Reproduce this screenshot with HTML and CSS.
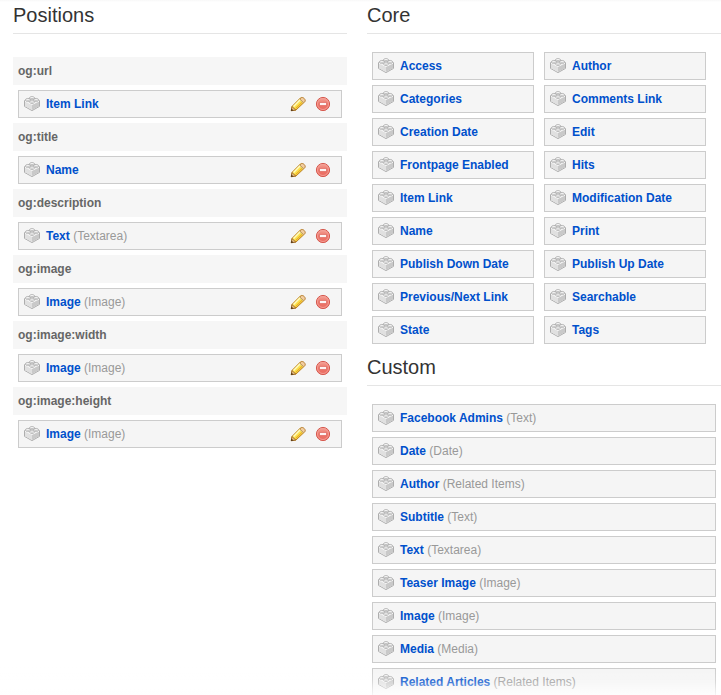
FILE: index.html
```html
<!DOCTYPE html>
<html lang="en">
<head>
<meta charset="utf-8">
<title>Positions</title>
<link rel="stylesheet" href="styles.css">
</head>
<body>
<svg class="sprite" aria-hidden="true">
  <defs>
    <linearGradient id="wood" x1="0" y1="0" x2="1" y2="1"><stop offset="0" stop-color="#fff58a"/><stop offset=".5" stop-color="#fde04a"/><stop offset="1" stop-color="#efb52a"/></linearGradient>
    <linearGradient id="red" x1="0" y1="0" x2="0" y2="1"><stop offset="0" stop-color="#f4a79c"/><stop offset=".5" stop-color="#ec7468"/><stop offset="1" stop-color="#ea6c62"/></linearGradient>
    <symbol id="brick" viewBox="0 0 16 16">
      <path d="M.5 4.6 8 1.2l7.5 3.4v5.8L8 14.6.5 10.4z" fill="#f0f0f0" stroke="#adadad"/>
      <path d="M8 8.4 15 5.2v5L8 14z" fill="#c9c9c9"/>
      <path d="M1 5.2 8 8.4V14l-7-3.8z" fill="#e0e0e0"/>
      <path d="M1 5.1 8 8.4l7-3.3" fill="none" stroke="#fafafa"/>
      <g fill="#fafafa" stroke="#a8a8a8" stroke-width=".7">
        <path d="M5.8 1.5v1.3c0 1.3 4.4 1.3 4.4 0V1.5"/><ellipse cx="8" cy="1.5" rx="2.2" ry="1"/>
        <path d="M1.7 3.4v1.3c0 1.3 4.4 1.3 4.4 0V3.4"/><ellipse cx="3.9" cy="3.4" rx="2.2" ry="1"/>
        <path d="M9.9 3.4v1.3c0 1.3 4.4 1.3 4.4 0V3.4"/><ellipse cx="12.1" cy="3.4" rx="2.2" ry="1"/>
        <path d="M5.8 5.2v1.4c0 1.3 4.4 1.3 4.4 0V5.2"/><ellipse cx="8" cy="5.2" rx="2.2" ry="1"/>
      </g>
    </symbol>
    <symbol id="pencil" viewBox="0 0 16 16">
      <path d="M1.4 14.5 2 10.4 10.4 2c1.8-1.8 6 1.6 4.1 4L6 14z" fill="url(#wood)" stroke="#bd811f"/>
      <path d="m3.6 10.4 6.8-6.8" stroke="#fffcc4" stroke-width="1.4"/>
      <path d="m5.6 12.6 7.6-7.4" stroke="#e2a425"/>
      <path d="m11 1.9c1.6-1.4 5.2 1.4 3.8 3.6l-1 1.2-3.8-3.6z" fill="#f2cda0" stroke="#b98647" stroke-width=".8"/>
      <path d="m9.6 3.4 3.4 3.4" stroke="#cfc79c" stroke-width=".9"/>
      <path d="M2 10.6 5.8 14l-4.6.8z" fill="#e9c186" stroke="#94611f" stroke-width=".8"/>
      <path d="M1.4 12.4.9 15.1l2.7-.6z" fill="#553819"/>
    </symbol>
    <symbol id="remove" viewBox="0 0 16 16">
      <circle cx="8" cy="8" r="6.6" fill="url(#red)" stroke="#d65a50"/>
      <circle cx="8" cy="8" r="5.5" fill="none" stroke="#f4a097" stroke-width=".9"/>
      <path d="M4.5 6.6h7v2.8h-7z" fill="#fff" stroke="#d9564c" stroke-width=".6"/>
    </symbol>
  </defs>
</svg>
<main class="layout">
  <section class="column">
    <h2 class="legend">Positions</h2>
    <div class="positions">
      <h3 class="position">og:url</h3>
      <div class="element"><svg class="icon"><use href="#brick"/></svg><p class="name"><a href="#">Item Link</a></p><button class="tool" aria-label="Edit"><svg class="icon"><use href="#pencil"/></svg></button><button class="tool" aria-label="Remove"><svg class="icon"><use href="#remove"/></svg></button></div>
      <h3 class="position">og:title</h3>
      <div class="element"><svg class="icon"><use href="#brick"/></svg><p class="name"><a href="#">Name</a></p><button class="tool" aria-label="Edit"><svg class="icon"><use href="#pencil"/></svg></button><button class="tool" aria-label="Remove"><svg class="icon"><use href="#remove"/></svg></button></div>
      <h3 class="position">og:description</h3>
      <div class="element"><svg class="icon"><use href="#brick"/></svg><p class="name"><a href="#">Text</a> (Textarea)</p><button class="tool" aria-label="Edit"><svg class="icon"><use href="#pencil"/></svg></button><button class="tool" aria-label="Remove"><svg class="icon"><use href="#remove"/></svg></button></div>
      <h3 class="position">og:image</h3>
      <div class="element"><svg class="icon"><use href="#brick"/></svg><p class="name"><a href="#">Image</a> (Image)</p><button class="tool" aria-label="Edit"><svg class="icon"><use href="#pencil"/></svg></button><button class="tool" aria-label="Remove"><svg class="icon"><use href="#remove"/></svg></button></div>
      <h3 class="position">og:image:width</h3>
      <div class="element"><svg class="icon"><use href="#brick"/></svg><p class="name"><a href="#">Image</a> (Image)</p><button class="tool" aria-label="Edit"><svg class="icon"><use href="#pencil"/></svg></button><button class="tool" aria-label="Remove"><svg class="icon"><use href="#remove"/></svg></button></div>
      <h3 class="position">og:image:height</h3>
      <div class="element"><svg class="icon"><use href="#brick"/></svg><p class="name"><a href="#">Image</a> (Image)</p><button class="tool" aria-label="Edit"><svg class="icon"><use href="#pencil"/></svg></button><button class="tool" aria-label="Remove"><svg class="icon"><use href="#remove"/></svg></button></div>
    </div>
  </section>
  <div class="column">
    <section class="group">
      <h2 class="legend">Core</h2>
      <div class="elements core">
        <div class="element"><svg class="icon"><use href="#brick"/></svg><p class="name"><a href="#">Access</a></p></div>
        <div class="element"><svg class="icon"><use href="#brick"/></svg><p class="name"><a href="#">Author</a></p></div>
        <div class="element"><svg class="icon"><use href="#brick"/></svg><p class="name"><a href="#">Categories</a></p></div>
        <div class="element"><svg class="icon"><use href="#brick"/></svg><p class="name"><a href="#">Comments Link</a></p></div>
        <div class="element"><svg class="icon"><use href="#brick"/></svg><p class="name"><a href="#">Creation Date</a></p></div>
        <div class="element"><svg class="icon"><use href="#brick"/></svg><p class="name"><a href="#">Edit</a></p></div>
        <div class="element"><svg class="icon"><use href="#brick"/></svg><p class="name"><a href="#">Frontpage Enabled</a></p></div>
        <div class="element"><svg class="icon"><use href="#brick"/></svg><p class="name"><a href="#">Hits</a></p></div>
        <div class="element"><svg class="icon"><use href="#brick"/></svg><p class="name"><a href="#">Item Link</a></p></div>
        <div class="element"><svg class="icon"><use href="#brick"/></svg><p class="name"><a href="#">Modification Date</a></p></div>
        <div class="element"><svg class="icon"><use href="#brick"/></svg><p class="name"><a href="#">Name</a></p></div>
        <div class="element"><svg class="icon"><use href="#brick"/></svg><p class="name"><a href="#">Print</a></p></div>
        <div class="element"><svg class="icon"><use href="#brick"/></svg><p class="name"><a href="#">Publish Down Date</a></p></div>
        <div class="element"><svg class="icon"><use href="#brick"/></svg><p class="name"><a href="#">Publish Up Date</a></p></div>
        <div class="element"><svg class="icon"><use href="#brick"/></svg><p class="name"><a href="#">Previous/Next Link</a></p></div>
        <div class="element"><svg class="icon"><use href="#brick"/></svg><p class="name"><a href="#">Searchable</a></p></div>
        <div class="element"><svg class="icon"><use href="#brick"/></svg><p class="name"><a href="#">State</a></p></div>
        <div class="element"><svg class="icon"><use href="#brick"/></svg><p class="name"><a href="#">Tags</a></p></div>
      </div>
    </section>
    <section class="group">
      <h2 class="legend">Custom</h2>
      <div class="elements">
        <div class="element"><svg class="icon"><use href="#brick"/></svg><p class="name"><a href="#">Facebook Admins</a> (Text)</p></div>
        <div class="element"><svg class="icon"><use href="#brick"/></svg><p class="name"><a href="#">Date</a> (Date)</p></div>
        <div class="element"><svg class="icon"><use href="#brick"/></svg><p class="name"><a href="#">Author</a> (Related Items)</p></div>
        <div class="element"><svg class="icon"><use href="#brick"/></svg><p class="name"><a href="#">Subtitle</a> (Text)</p></div>
        <div class="element"><svg class="icon"><use href="#brick"/></svg><p class="name"><a href="#">Text</a> (Textarea)</p></div>
        <div class="element"><svg class="icon"><use href="#brick"/></svg><p class="name"><a href="#">Teaser Image</a> (Image)</p></div>
        <div class="element"><svg class="icon"><use href="#brick"/></svg><p class="name"><a href="#">Image</a> (Image)</p></div>
        <div class="element"><svg class="icon"><use href="#brick"/></svg><p class="name"><a href="#">Media</a> (Media)</p></div>
        <div class="element"><svg class="icon"><use href="#brick"/></svg><p class="name"><a href="#">Related Articles</a> (Related Items)</p></div>
      </div>
    </section>
  </div>
</main>
<div class="fade"></div>
</body>
</html>
```

FILE: styles.css
```css
* {
  box-sizing: border-box;
}

body {
  margin: 0;
  height: 100vh;
  overflow: hidden;
  background: linear-gradient(#f8f8f8, #fff 2px);
  color: #999;
  font: 12px/18px "Liberation Sans", Arial, sans-serif;
}

h2, h3, p {
  margin: 0;
}

a {
  color: #0050cc;
  font-weight: bold;
  text-decoration: none;
}

.sprite {
  position: absolute;
  width: 0;
  height: 0;
}

.layout {
  display: grid;
  grid-template-columns: 334fr 354fr;
  gap: 20px;
  padding-left: 13px;
}

.legend {
  padding-bottom: 3px;
  border-bottom: 1px solid #e5e5e5;
  color: #333;
  font-size: 20px;
  font-weight: normal;
  line-height: 30px;
}

.positions {
  display: grid;
  gap: 5px;
  margin-top: 23px;
}

.position {
  padding: 5px;
  background: #f6f6f6;
  color: #666;
  font-size: 12px;
  line-height: 18px;
}

.positions .element {
  margin: 0 5px;
}

.group + .group {
  margin-top: 8px;
}

.elements {
  display: grid;
  gap: 5px 10px;
  margin-top: 18px;
  padding: 0 5px;
}

.core {
  grid-template-columns: 1fr 1fr;
  padding-right: 15px;
}

.element {
  display: flex;
  align-items: center;
  height: 28px;
  padding: 0 10px 0 5px;
  border: 1px solid #ccc;
  background: #f5f5f5;
}

.icon {
  display: block;
  flex: none;
  width: 16px;
  height: 16px;
  overflow: visible;
}

.name {
  flex: 1;
  padding-left: 6px;
}

.tool {
  margin-left: 9px;
  padding: 0;
  border: 0;
  background: none;
  cursor: pointer;
}

.fade {
  position: fixed;
  right: 0;
  bottom: 0;
  left: 0;
  height: 28px;
  background: linear-gradient(rgba(255, 255, 255, 0), rgba(255, 255, 255, .2) 50%, rgba(255, 255, 255, .8));
  pointer-events: none;
}
```
